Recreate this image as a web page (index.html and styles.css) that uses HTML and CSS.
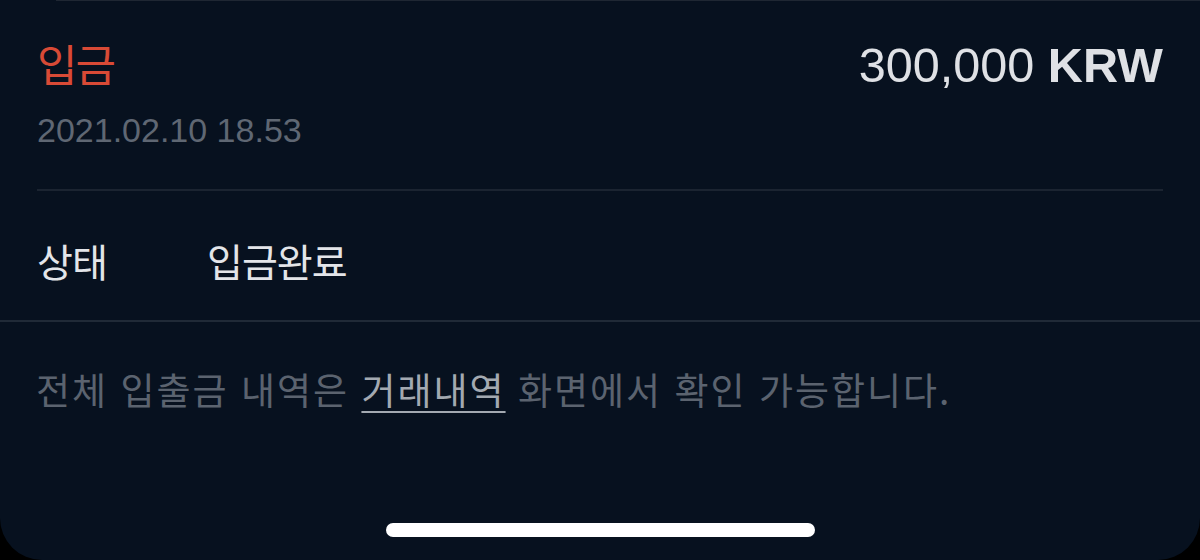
FILE: index.html
```html
<!DOCTYPE html>
<html lang="ko">
<head>
<meta charset="utf-8">
<link rel="stylesheet" href="styles.css">
</head>
<body>
<div class="screen">
  <div class="topline"></div>
  <section class="head">
    <div class="row">
      <div class="type">입금</div>
      <div class="amount">300,000 <b>KRW</b></div>
    </div>
    <div class="date">2021.02.10 18.53</div>
  </section>
  <div class="divider"></div>
  <section class="status">
    <span class="label">상태</span>
    <span class="value">입금완료</span>
  </section>
  <div class="divider full"></div>
  <p class="note">전체 입출금 내역은 <span class="link">거래내역</span> 화면에서 확인 가능합니다.</p>
  <div class="spacer"></div>
  <div class="home"></div>
</div>
</body>
</html>
```
FILE: styles.css
```css
html, body {
  margin: 0;
  padding: 0;
  background: #000;
}
.screen {
  width: 1200px;
  height: 560px;
  background: #07111f;
  border-radius: 0 0 42px 42px;
  overflow: hidden;
  display: flex;
  flex-direction: column;
  font-family: "Noto Sans CJK KR", "Liberation Sans", sans-serif;
}
.topline {
  height: 1px;
  margin-left: 56px;
  background: #1f2733;
}
.head {
  padding: 34px 37px 0 37px;
}
.row {
  display: flex;
  justify-content: space-between;
  align-items: baseline;
}
.type {
  color: #d84a36;
  font-size: 44px;
  line-height: 56px;
  letter-spacing: -2px;
}
.amount {
  color: #dfe1e5;
  font-family: "Liberation Sans", sans-serif;
  font-size: 48.6px;
  line-height: 56px;
}
.amount b {
  font-weight: bold;
}
.date {
  margin-top: 20px;
  color: #5f6773;
  font-family: "Liberation Sans", sans-serif;
  font-size: 34px;
  line-height: 34px;
}
.divider {
  height: 2px;
  margin: 42px 37px 0 37px;
  background: #1b2431;
}
.divider.full {
  margin: 0;
  background: #202a37;
}
.status {
  display: flex;
  align-items: center;
  height: 121px;
  padding: 8px 37px 0 37px;
  color: #e3e5e9;
  font-size: 39px;
  letter-spacing: -1px;
}
.label {
  width: 170px;
}
.note {
  margin: 43px 0 0 36px;
  color: #5b636f;
  font-size: 37px;
  line-height: 48px;
  letter-spacing: 2px;
}
.link {
  color: #a3a9b1;
  text-decoration: underline;
  text-decoration-thickness: 2px;
  text-underline-offset: 6px;
}
.spacer {
  flex: 1;
}
.home {
  align-self: center;
  width: 429px;
  height: 14px;
  border-radius: 7px;
  background: #fff;
  margin-bottom: 23px;
}
```
